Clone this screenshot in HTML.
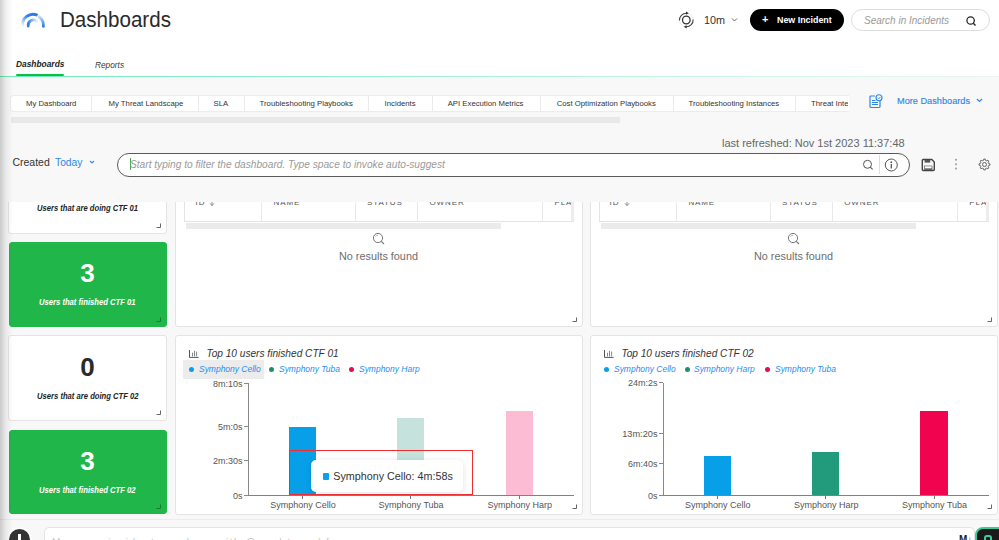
<!DOCTYPE html><html><head><meta charset="utf-8"><style>
html,body{margin:0;padding:0;}
body{width:999px;height:540px;overflow:hidden;position:relative;background:#f8f8f8;font-family:"Liberation Sans",sans-serif;}
.t{position:absolute;white-space:nowrap;}
.r{position:absolute;box-sizing:border-box;}
svg{position:absolute;overflow:visible;}
.i{font-style:italic}
.b{font-weight:bold}
</style></head><body>
<div class="r" style="left:0px;top:0px;width:999px;height:76px;background:#fff"></div>
<div class="r" style="left:0px;top:76px;width:999px;height:1px;background:linear-gradient(to right,#70e9b7 0%,#9ff0d5 40%,#cdf5e6 72%,#eaf8f3 100%)"></div>
<div class="r" style="left:16px;top:74px;width:48px;height:2px;background:#08bf48;border-radius:1px"></div>
<svg style="left:0;top:0" width="60" height="40">
<defs>
<linearGradient id="lg1" x1="0" y1="1" x2="1" y2="0"><stop offset="0" stop-color="#2b7de9" stop-opacity="0"/><stop offset="0.6" stop-color="#2b7de9"/></linearGradient>
<linearGradient id="lg2" x1="0" y1="0" x2="0" y2="1"><stop offset="0" stop-color="#2b7de9" stop-opacity="0.3"/><stop offset="1" stop-color="#2b7de9"/></linearGradient>
<linearGradient id="lg3" x1="0" y1="0" x2="1" y2="0"><stop offset="0" stop-color="#2b7de9"/><stop offset="1" stop-color="#2b7de9" stop-opacity="0.1"/></linearGradient>
</defs>
<path d="M22.6 26.5 A10.6 10.6 0 0 1 37.6 15.3" fill="none" stroke="url(#lg1)" stroke-width="2.9"/>
<path d="M39.3 16.8 A10.6 10.6 0 0 1 43.4 26.3" fill="none" stroke="url(#lg2)" stroke-width="2.8" stroke-linecap="round"/>
<path d="M28.3 26 A5.2 5.2 0 0 1 36.8 21.2" fill="none" stroke="url(#lg3)" stroke-width="2.8" stroke-linecap="round"/>
</svg>
<div class="t " style="left:59.50px;top:8.98px;font-size:22px;line-height:22px;color:#2a2a2a;transform:scaleX(0.935);transform-origin:0 0">Dashboards</div>
<svg style="left:676px;top:10px" width="20" height="20" viewBox="0 0 20 20">
<circle cx="10.3" cy="10" r="3.8" fill="none" stroke="#333" stroke-width="1.3"/>
<circle cx="10.3" cy="10" r="6.8" fill="none" stroke="#ccc" stroke-width="0.7" stroke-dasharray="1.2 1"/>
<path d="M3.5 10.5 A6.8 6.8 0 0 1 10.5 3.2" fill="none" stroke="#444" stroke-width="1.1"/>
<path d="M17.1 9.5 A6.8 6.8 0 0 1 10.1 16.8" fill="none" stroke="#444" stroke-width="1.1"/>
<path d="M10 1.6 L12.8 3.2 L10 4.7 Z" fill="#333"/>
<path d="M10.6 15.3 L7.8 16.8 L10.6 18.4 Z" fill="#333"/>
</svg>
<div class="t " style="left:704.00px;top:14.96px;font-size:10.8px;line-height:10.8px;color:#333;">10m</div>
<svg style="left:731px;top:17px" width="8" height="6"><path d="M1 1.5 L3.5 4 L6 1.5" fill="none" stroke="#666" stroke-width="1"/></svg>
<div class="r" style="left:750px;top:9px;width:94px;height:22px;background:#000;border-radius:11px"></div>
<div class="t " style="left:762.00px;top:14.29px;font-size:11px;line-height:11px;color:#fff;font-weight:bold">+</div>
<div class="t " style="left:777.00px;top:15.87px;font-size:8.9px;line-height:8.9px;color:#fff;font-weight:bold">New Incident</div>
<div class="r" style="left:851px;top:9px;width:139px;height:22px;background:#fff;border:1px solid #dedede;border-radius:11px"></div>
<div class="t " style="left:864.00px;top:15.84px;font-size:10px;line-height:10px;color:#999;font-style:italic">Search in Incidents</div>
<svg style="left:965px;top:15px" width="12" height="12"><circle cx="5.6" cy="5.5" r="3.7" fill="none" stroke="#222" stroke-width="1.25"/><path d="M8.3 8.2 L10.5 10.4" stroke="#222" stroke-width="1.35"/></svg>
<div class="t " style="left:16.00px;top:59.89px;font-size:8.4px;line-height:8.4px;color:#222;font-style:italic;font-weight:bold">Dashboards</div>
<div class="t " style="left:95.00px;top:60.77px;font-size:8.3px;line-height:8.3px;color:#3a3a3a;font-style:italic">Reports</div>
<div class="r" style="left:9.5px;top:95.3px;width:839.5px;height:16.299999999999997px;background:#fff;border:1px solid #ececec;border-right:none;border-radius:4px 0 0 4px"></div>
<div class="r" style="left:91.0px;top:96px;width:1px;height:15px;background:#eaeaea"></div>
<div class="r" style="left:197.7px;top:96px;width:1px;height:15px;background:#eaeaea"></div>
<div class="r" style="left:243.7px;top:96px;width:1px;height:15px;background:#eaeaea"></div>
<div class="r" style="left:368.4px;top:96px;width:1px;height:15px;background:#eaeaea"></div>
<div class="r" style="left:431.5px;top:96px;width:1px;height:15px;background:#eaeaea"></div>
<div class="r" style="left:540.2px;top:96px;width:1px;height:15px;background:#eaeaea"></div>
<div class="r" style="left:673.0px;top:96px;width:1px;height:15px;background:#eaeaea"></div>
<div class="r" style="left:795.4px;top:96px;width:1px;height:15px;background:#eaeaea"></div>
<div style="position:absolute;left:0;top:0;width:848px;height:120px;overflow:hidden">
<div class="t " style="left:26.00px;top:100.04px;font-size:7.75px;line-height:7.75px;color:#333;">My Dashboard</div>
<div class="t " style="left:108.50px;top:100.04px;font-size:7.75px;line-height:7.75px;color:#333;">My Threat Landscape</div>
<div class="t " style="left:213.60px;top:100.04px;font-size:7.75px;line-height:7.75px;color:#333;">SLA</div>
<div class="t " style="left:259.60px;top:100.04px;font-size:7.75px;line-height:7.75px;color:#333;">Troubleshooting Playbooks</div>
<div class="t " style="left:384.60px;top:100.04px;font-size:7.75px;line-height:7.75px;color:#333;">Incidents</div>
<div class="t " style="left:447.70px;top:100.04px;font-size:7.75px;line-height:7.75px;color:#333;">API Execution Metrics</div>
<div class="t " style="left:556.70px;top:100.04px;font-size:7.75px;line-height:7.75px;color:#333;">Cost Optimization Playbooks</div>
<div class="t " style="left:688.60px;top:100.04px;font-size:7.75px;line-height:7.75px;color:#333;">Troubleshooting Instances</div>
<div class="t " style="left:811.00px;top:100.04px;font-size:7.75px;line-height:7.75px;color:#333;">Threat Intelligence</div>
</div>
<div class="r" style="left:11px;top:117px;width:609px;height:6px;background:#e8e8e8"></div>
<svg style="left:868px;top:93px" width="16" height="16" viewBox="0 0 16 16">
<path d="M7 3 H3 Q2 3 2 4 V13.5 Q2 14.5 3 14.5 H11 Q12 14.5 12 13.5 V8" fill="none" stroke="#2f86e8" stroke-width="1.2"/>
<path d="M4 7.5 H7.5 M4 9.5 H10 M4 11.5 H10" stroke="#2f86e8" stroke-width="1"/>
<circle cx="11" cy="4.8" r="3" fill="#f8f8f8" stroke="#2f86e8" stroke-width="1.1"/>
<path d="M9.7 4.9 L10.8 5.8 L12.4 3.9" fill="none" stroke="#2f86e8" stroke-width="0.9"/>
</svg>
<div class="t " style="left:897.00px;top:96.51px;font-size:9.2px;line-height:9.2px;color:#2f86e8;-webkit-text-stroke:0.15px #2f86e8">More Dashboards</div>
<svg style="left:976px;top:98px" width="8" height="6"><path d="M1 1 L3.5 3.5 L6 1" fill="none" stroke="#2f86e8" stroke-width="1.1"/></svg>
<div class="t " style="left:722.00px;top:138.09px;font-size:11px;line-height:11px;color:#666;">last refreshed: Nov 1st 2023 11:37:48</div>
<div class="t " style="left:12.40px;top:157.11px;font-size:10.5px;line-height:10.5px;color:#333;">Created</div>
<div class="t " style="left:55.00px;top:158.28px;font-size:10.3px;line-height:10.3px;color:#2f86e8;">Today</div>
<svg style="left:89px;top:160px" width="7" height="6"><path d="M1 1 L3 3 L5 1" fill="none" stroke="#3d8ce8" stroke-width="1.1"/></svg>
<div class="r" style="left:117px;top:153px;width:793px;height:24px;background:#fff;border:1.2px solid #5a5a5a;border-radius:12px"></div>
<div class="r" style="left:130px;top:158px;width:1px;height:12px;background:#4caf50"></div>
<div class="t " style="left:130.00px;top:159.80px;font-size:10.16px;line-height:10.16px;color:#9a9a9a;font-style:italic">Start typing to filter the dashboard. Type space to invoke auto-suggest</div>
<svg style="left:862px;top:159px" width="12" height="12"><circle cx="5.5" cy="5.3" r="4" fill="none" stroke="#555" stroke-width="1"/><path d="M8.3 8.1 L10.6 10.4" stroke="#555" stroke-width="1.1"/></svg>
<div class="r" style="left:879px;top:155px;width:1px;height:19px;background:#ddd"></div>
<svg style="left:884px;top:158px" width="15" height="15"><circle cx="7.3" cy="7" r="6" fill="none" stroke="#555" stroke-width="1"/><circle cx="7.3" cy="4.2" r="0.9" fill="#555"/><path d="M7.3 6 V10.5" stroke="#555" stroke-width="1.3"/></svg>
<svg style="left:921px;top:157.5px" width="15" height="14" viewBox="0 0 15 14">
<path d="M2.3 1.5 H10.8 L13.3 4 V11.5 Q13.3 12.5 12.3 12.5 H2.3 Q1.3 12.5 1.3 11.5 V2.5 Q1.3 1.5 2.3 1.5 Z" fill="none" stroke="#444" stroke-width="1.4"/>
<rect x="3.6" y="2" width="5.6" height="2.6" fill="#555"/>
<rect x="3.2" y="7.6" width="8.2" height="4.4" fill="#666"/>
<rect x="4" y="8.3" width="6.6" height="2" fill="#fff"/>
</svg>
<svg style="left:953px;top:158px" width="6" height="13"><circle cx="3" cy="1.8" r="1" fill="#999"/><circle cx="3" cy="6.2" r="1" fill="#999"/><circle cx="3" cy="10.6" r="1" fill="#999"/></svg>
<svg style="left:978px;top:158px" width="13" height="13" viewBox="0 0 13 13">
<path fill="none" stroke="#555" stroke-width="0.9" stroke-linejoin="round" d="M5.56 2.30 L5.82 1.04 L7.18 1.04 L7.44 2.30 L8.80 2.87 L9.88 2.16 L10.84 3.12 L10.13 4.20 L10.70 5.56 L11.96 5.82 L11.96 7.18 L10.70 7.44 L10.13 8.80 L10.84 9.88 L9.88 10.84 L8.80 10.13 L7.44 10.70 L7.18 11.96 L5.82 11.96 L5.56 10.70 L4.20 10.13 L3.12 10.84 L2.16 9.88 L2.87 8.80 L2.30 7.44 L1.04 7.18 L1.04 5.82 L2.30 5.56 L2.87 4.20 L2.16 3.12 L3.12 2.16 L4.20 2.87 Z"/>
<circle cx="6.5" cy="6.5" r="2" fill="none" stroke="#555" stroke-width="0.9"/>
</svg>
<div style="position:absolute;left:0;top:201.6px;width:999px;height:317.4px;overflow:hidden">
<div class="r" style="left:8px;top:-51.599999999999994px;width:159px;height:84px;background:#fff;border:1px solid #e4e4e4;border-radius:3px"></div>
<div class="t " style="left:37.00px;top:2.20px;font-size:8.5px;line-height:8.5px;color:#222;font-style:italic;font-weight:bold;transform:scaleX(0.895);transform-origin:0 0">Users that are doing CTF 01</div>
<svg style="left:156px;top:21.400000000000006px" width="6" height="6"><path d="M4.5 0.5 V4.5 H0.5" fill="none" stroke="#666" stroke-width="1"/></svg>
<div class="r" style="left:9px;top:40.400000000000006px;width:158px;height:85px;background:#21b64a;border:1px solid #21b64a;border-radius:3px"></div>
<div class="t " style="left:67.50px;top:58.39px;font-size:26px;line-height:26px;color:#fff;font-weight:bold;width:40px;text-align:center">3</div>
<div class="t " style="left:39.00px;top:96.40px;font-size:8.5px;line-height:8.5px;color:#fff;font-style:italic;font-weight:bold;transform:scaleX(0.9);transform-origin:0 0">Users that finished CTF 01</div>
<svg style="left:156px;top:115.4px" width="6" height="6"><path d="M4.5 0.5 V4.5 H0.5" fill="none" stroke="#1a7a34" stroke-width="1"/></svg>
<div class="r" style="left:175px;top:-51.599999999999994px;width:408px;height:177px;background:#fff;border:1px solid #e4e4e4;border-radius:3px"></div>
<div class="r" style="left:183.5px;top:-51.599999999999994px;width:390.5px;height:71.5px;border:1px solid #e4e4e4;background:#fff"></div>
<div class="r" style="left:571px;top:-51.599999999999994px;width:3px;height:71px;background:#ededed"></div>
<div class="r" style="left:260.8px;top:-51.599999999999994px;width:1px;height:71px;background:#e8e8e8"></div>
<div class="r" style="left:354.5px;top:-51.599999999999994px;width:1px;height:71px;background:#e8e8e8"></div>
<div class="r" style="left:417px;top:-51.599999999999994px;width:1px;height:71px;background:#e8e8e8"></div>
<div class="r" style="left:542px;top:-51.599999999999994px;width:1px;height:71px;background:#e8e8e8"></div>
<div style="position:absolute;left:183.5px;top:0;width:387px;height:30px;overflow:hidden"><div class="t " style="left:12.10px;top:-2.57px;font-size:8px;line-height:8px;color:#555;letter-spacing:0.9px">ID</div>
<div class="t " style="left:90.10px;top:-2.57px;font-size:8px;line-height:8px;color:#555;letter-spacing:0.9px">NAME</div>
<div class="t " style="left:183.50px;top:-2.57px;font-size:8px;line-height:8px;color:#555;letter-spacing:0.9px">STATUS</div>
<div class="t " style="left:246.00px;top:-2.57px;font-size:8px;line-height:8px;color:#555;letter-spacing:0.9px">OWNER</div>
<div class="t " style="left:371.00px;top:-2.57px;font-size:8px;line-height:8px;color:#555;letter-spacing:0.9px">PLAYBOOK</div>
</div>
<svg style="left:208.5px;top:-1.9px" width="7" height="7"><path d="M3 0 V5.5 M1 3.4 L3 5.6 L5 3.4" fill="none" stroke="#888" stroke-width="0.95"/></svg>
<div class="r" style="left:186px;top:21.400000000000006px;width:314.75px;height:6.0px;background:#ebebeb"></div>
<svg style="left:372px;top:30.400000000000006px" width="14" height="14"><circle cx="6" cy="6" r="4.6" fill="none" stroke="#777" stroke-width="1"/><path d="M3.6 4.6 A2.8 2.8 0 0 1 6 3.2" fill="none" stroke="#999" stroke-width="0.8"/><path d="M9.3 9.3 L12 12" stroke="#777" stroke-width="1.1"/></svg>
<div class="t " style="left:339.00px;top:49.22px;font-size:10.85px;line-height:10.85px;color:#6e6e6e;">No results found</div>
<svg style="left:572px;top:115.4px" width="6" height="6"><path d="M4.5 0.5 V4.5 H0.5" fill="none" stroke="#666" stroke-width="1"/></svg>
<div class="r" style="left:590px;top:-51.599999999999994px;width:408px;height:177px;background:#fff;border:1px solid #e4e4e4;border-radius:3px"></div>
<div class="r" style="left:598.5px;top:-51.599999999999994px;width:390.5px;height:71.5px;border:1px solid #e4e4e4;background:#fff"></div>
<div class="r" style="left:986px;top:-51.599999999999994px;width:3px;height:71px;background:#ededed"></div>
<div class="r" style="left:675.8px;top:-51.599999999999994px;width:1px;height:71px;background:#e8e8e8"></div>
<div class="r" style="left:769.5px;top:-51.599999999999994px;width:1px;height:71px;background:#e8e8e8"></div>
<div class="r" style="left:832px;top:-51.599999999999994px;width:1px;height:71px;background:#e8e8e8"></div>
<div class="r" style="left:957px;top:-51.599999999999994px;width:1px;height:71px;background:#e8e8e8"></div>
<div style="position:absolute;left:598.5px;top:0;width:387px;height:30px;overflow:hidden"><div class="t " style="left:11.10px;top:-2.57px;font-size:8px;line-height:8px;color:#555;letter-spacing:0.9px">ID</div>
<div class="t " style="left:89.90px;top:-2.57px;font-size:8px;line-height:8px;color:#555;letter-spacing:0.9px">NAME</div>
<div class="t " style="left:183.50px;top:-2.57px;font-size:8px;line-height:8px;color:#555;letter-spacing:0.9px">STATUS</div>
<div class="t " style="left:245.70px;top:-2.57px;font-size:8px;line-height:8px;color:#555;letter-spacing:0.9px">OWNER</div>
<div class="t " style="left:370.80px;top:-2.57px;font-size:8px;line-height:8px;color:#555;letter-spacing:0.9px">PLAYBOOK</div>
</div>
<svg style="left:623.5px;top:-1.9px" width="7" height="7"><path d="M3 0 V5.5 M1 3.4 L3 5.6 L5 3.4" fill="none" stroke="#888" stroke-width="0.95"/></svg>
<div class="r" style="left:601px;top:21.400000000000006px;width:315px;height:6.0px;background:#ebebeb"></div>
<svg style="left:787px;top:30.400000000000006px" width="14" height="14"><circle cx="6" cy="6" r="4.6" fill="none" stroke="#777" stroke-width="1"/><path d="M3.6 4.6 A2.8 2.8 0 0 1 6 3.2" fill="none" stroke="#999" stroke-width="0.8"/><path d="M9.3 9.3 L12 12" stroke="#777" stroke-width="1.1"/></svg>
<div class="t " style="left:754.00px;top:49.22px;font-size:10.85px;line-height:10.85px;color:#6e6e6e;">No results found</div>
<svg style="left:987px;top:115.4px" width="6" height="6"><path d="M4.5 0.5 V4.5 H0.5" fill="none" stroke="#666" stroke-width="1"/></svg>
<div class="r" style="left:8px;top:133.4px;width:159px;height:86.5px;background:#fff;border:1px solid #e4e4e4;border-radius:3px"></div>
<div class="t " style="left:67.50px;top:151.99px;font-size:26px;line-height:26px;color:#2a2a2a;font-weight:bold;width:40px;text-align:center">0</div>
<div class="t " style="left:36.70px;top:190.20px;font-size:8.5px;line-height:8.5px;color:#222;font-style:italic;font-weight:bold;transform:scaleX(0.9);transform-origin:0 0">Users that are doing CTF 02</div>
<svg style="left:156px;top:208.4px" width="6" height="6"><path d="M4.5 0.5 V4.5 H0.5" fill="none" stroke="#666" stroke-width="1"/></svg>
<div class="r" style="left:9px;top:228.4px;width:158px;height:84.20000000000005px;background:#21b64a;border:1px solid #21b64a;border-radius:3px"></div>
<div class="t " style="left:67.50px;top:245.99px;font-size:26px;line-height:26px;color:#fff;font-weight:bold;width:40px;text-align:center">3</div>
<div class="t " style="left:39.30px;top:284.00px;font-size:8.5px;line-height:8.5px;color:#fff;font-style:italic;font-weight:bold;transform:scaleX(0.9);transform-origin:0 0">Users that finished CTF 02</div>
<svg style="left:156px;top:302.4px" width="6" height="6"><path d="M4.5 0.5 V4.5 H0.5" fill="none" stroke="#1a7a34" stroke-width="1"/></svg>
<div class="r" style="left:175px;top:133.4px;width:408px;height:180px;background:#fff;border:1px solid #e4e4e4;border-radius:3px"></div>
<svg style="left:189px;top:148.4px" width="11" height="9"><path d="M0.5 0 V7.4 H9.6" fill="none" stroke="#555" stroke-width="1"/><path d="M3.5 6 V3.1 M5.5 6 V1.2 M7.6 6 V1.9" stroke="#777" stroke-width="0.9" stroke-linecap="round"/></svg>
<div class="t " style="left:206.40px;top:147.01px;font-size:10.15px;line-height:10.15px;color:#333;font-style:italic">Top 10 users finished CTF 01</div>
<div class="r" style="left:183.3px;top:158.79999999999998px;width:81.0px;height:18.600000000000023px;background:#ececec"></div>
<div class="r" style="left:188.8px;top:165.4px;width:5px;height:5px;border-radius:50%;background:#07a0e8"></div>
<div class="t " style="left:198.50px;top:163.33px;font-size:9.3px;line-height:9.3px;color:#2b8cf2;font-style:italic;transform:scaleX(0.91);transform-origin:0 0">Symphony Cello</div>
<div class="r" style="left:269.3px;top:165.4px;width:5px;height:5px;border-radius:50%;background:#1e8f6e"></div>
<div class="t " style="left:279.00px;top:163.33px;font-size:9.3px;line-height:9.3px;color:#2b8cf2;font-style:italic;transform:scaleX(0.91);transform-origin:0 0">Symphony Tuba</div>
<div class="r" style="left:349.1px;top:165.4px;width:5px;height:5px;border-radius:50%;background:#ea0a52"></div>
<div class="t " style="left:358.80px;top:163.33px;font-size:9.3px;line-height:9.3px;color:#2b8cf2;font-style:italic;transform:scaleX(0.91);transform-origin:0 0">Symphony Harp</div>
<div class="r" style="left:247.8px;top:181.4px;width:1.0px;height:112.99999999999997px;background:#8a8a8a"></div>
<div class="r" style="left:247.8px;top:293.4px;width:326.2px;height:1.0px;background:#808080"></div>
<div class="r" style="left:244.10000000000002px;top:181.50000000000003px;width:3.6999999999999886px;height:1.0px;background:#888"></div>
<div class="t" style="right:756.5px;top:178.43150000000003px;font-size:9px;line-height:9px;color:#555">8m:10s</div>
<div class="r" style="left:244.10000000000002px;top:224.20000000000002px;width:3.6999999999999886px;height:1.0px;background:#888"></div>
<div class="t" style="right:756.5px;top:221.13150000000002px;font-size:9px;line-height:9px;color:#555">5m:0s</div>
<div class="r" style="left:244.10000000000002px;top:258.5px;width:3.6999999999999886px;height:1.0px;background:#888"></div>
<div class="t" style="right:756.5px;top:255.4315px;font-size:9px;line-height:9px;color:#555">2m:30s</div>
<div class="r" style="left:244.10000000000002px;top:293.4px;width:3.6999999999999886px;height:1.0px;background:#888"></div>
<div class="t" style="right:756.5px;top:290.3315px;font-size:9px;line-height:9px;color:#555">0s</div>
<div class="r" style="left:289px;top:225.4px;width:27px;height:67.99999999999997px;background:#07a0e8"></div>
<div class="r" style="left:397px;top:216.20000000000002px;width:27.399999999999977px;height:42.19999999999996px;background:#c5e3dc"></div>
<div class="r" style="left:505.6px;top:209.6px;width:27.5px;height:83.79999999999998px;background:#fbbcd4"></div>
<div class="r" style="left:301.9px;top:293.4px;width:1.0px;height:4.5px;background:#777"></div>
<div class="t" style="left:263px;width:80px;text-align:center;top:299.18149999999997px;font-size:9px;line-height:9px;color:#555">Symphony Cello</div>
<div class="r" style="left:410.0px;top:293.4px;width:1.0px;height:4.5px;background:#777"></div>
<div class="t" style="left:371.1px;width:80px;text-align:center;top:299.18149999999997px;font-size:9px;line-height:9px;color:#555">Symphony Tuba</div>
<div class="r" style="left:518.6px;top:293.4px;width:1.0px;height:4.5px;background:#777"></div>
<div class="t" style="left:479.70000000000005px;width:80px;text-align:center;top:299.18149999999997px;font-size:9px;line-height:9px;color:#555">Symphony Harp</div>
<svg style="left:572px;top:302.4px" width="6" height="6"><path d="M4.5 0.5 V4.5 H0.5" fill="none" stroke="#666" stroke-width="1"/></svg>
<div class="r" style="left:590px;top:133.4px;width:408px;height:180px;background:#fff;border:1px solid #e4e4e4;border-radius:3px"></div>
<svg style="left:604px;top:148.4px" width="11" height="9"><path d="M0.5 0 V7.4 H9.6" fill="none" stroke="#555" stroke-width="1"/><path d="M3.5 6 V3.1 M5.5 6 V1.2 M7.6 6 V1.9" stroke="#777" stroke-width="0.9" stroke-linecap="round"/></svg>
<div class="t " style="left:621.40px;top:147.01px;font-size:10.15px;line-height:10.15px;color:#333;font-style:italic">Top 10 users finished CTF 02</div>
<div class="r" style="left:604.1px;top:165.4px;width:5px;height:5px;border-radius:50%;background:#07a0e8"></div>
<div class="t " style="left:613.80px;top:163.33px;font-size:9.3px;line-height:9.3px;color:#2b8cf2;font-style:italic;transform:scaleX(0.91);transform-origin:0 0">Symphony Cello</div>
<div class="r" style="left:684.5px;top:165.4px;width:5px;height:5px;border-radius:50%;background:#1e8f6e"></div>
<div class="t " style="left:694.20px;top:163.33px;font-size:9.3px;line-height:9.3px;color:#2b8cf2;font-style:italic;transform:scaleX(0.91);transform-origin:0 0">Symphony Harp</div>
<div class="r" style="left:764.9px;top:165.4px;width:5px;height:5px;border-radius:50%;background:#ea0a52"></div>
<div class="t " style="left:774.60px;top:163.33px;font-size:9.3px;line-height:9.3px;color:#2b8cf2;font-style:italic;transform:scaleX(0.91);transform-origin:0 0">Symphony Tuba</div>
<div class="r" style="left:662.8px;top:181.4px;width:1.0px;height:112.99999999999997px;background:#8a8a8a"></div>
<div class="r" style="left:662.8px;top:293.4px;width:326.20000000000005px;height:1.0px;background:#808080"></div>
<div class="r" style="left:659.0999999999999px;top:180.9px;width:3.7000000000000455px;height:1.0px;background:#888"></div>
<div class="t" style="right:341.5px;top:177.8315px;font-size:9px;line-height:9px;color:#555">24m:2s</div>
<div class="r" style="left:659.0999999999999px;top:231.20000000000002px;width:3.7000000000000455px;height:1.0px;background:#888"></div>
<div class="t" style="right:341.5px;top:227.96220000000002px;font-size:9.2px;line-height:9.2px;color:#555">13m:20s</div>
<div class="r" style="left:659.0999999999999px;top:261.79999999999995px;width:3.7000000000000455px;height:1.0px;background:#888"></div>
<div class="t" style="right:341.5px;top:258.7314999999999px;font-size:9px;line-height:9px;color:#555">6m:40s</div>
<div class="r" style="left:659.0999999999999px;top:293.4px;width:3.7000000000000455px;height:1.0px;background:#888"></div>
<div class="t" style="right:341.5px;top:290.3315px;font-size:9px;line-height:9px;color:#555">0s</div>
<div class="r" style="left:704px;top:254.50000000000003px;width:27px;height:38.89999999999995px;background:#07a0e8"></div>
<div class="r" style="left:812.2px;top:250.1px;width:27.0px;height:43.29999999999998px;background:#219b7c"></div>
<div class="r" style="left:920.3px;top:209.4px;width:27.5px;height:83.99999999999997px;background:#f0044f"></div>
<div class="r" style="left:716.6999999999999px;top:293.4px;width:1.0px;height:4.5px;background:#777"></div>
<div class="t" style="left:677.8px;width:80px;text-align:center;top:299.18149999999997px;font-size:9px;line-height:9px;color:#555">Symphony Cello</div>
<div class="r" style="left:825.1999999999999px;top:293.4px;width:1.0px;height:4.5px;background:#777"></div>
<div class="t" style="left:786.3px;width:80px;text-align:center;top:299.18149999999997px;font-size:9px;line-height:9px;color:#555">Symphony Harp</div>
<div class="r" style="left:933.5px;top:293.4px;width:1.0px;height:4.5px;background:#777"></div>
<div class="t" style="left:894.6px;width:80px;text-align:center;top:299.18149999999997px;font-size:9px;line-height:9px;color:#555">Symphony Tuba</div>
<svg style="left:987px;top:302.4px" width="6" height="6"><path d="M4.5 0.5 V4.5 H0.5" fill="none" stroke="#666" stroke-width="1"/></svg>
<div class="r" style="left:310.7px;top:258.4px;width:152.6px;height:32.2px;background:#fff;border-radius:5px;box-shadow:0 1px 6px rgba(0,0,0,0.12)"></div>
<div class="r" style="left:322.7px;top:271.70000000000005px;width:6.800000000000011px;height:6.699999999999932px;background:#0aa0ea;border-radius:1px"></div>
<div class="t " style="left:333.30px;top:269.50px;font-size:10.75px;line-height:10.75px;color:#333;">Symphony Cello: 4m:58s</div>
<div class="r" style="left:288.6px;top:248.4px;width:184.79999999999995px;height:44.99999999999997px;border:1.8px solid #ee2e2e"></div>
</div>
<div class="r" style="left:0px;top:519px;width:999px;height:21px;background:#f8f8f8;border-top:1px solid #ececec"></div>
<div class="r" style="left:43.6px;top:527.3px;width:931.9px;height:32.700000000000045px;background:#fff;border:1px solid #e4e4e4;border-radius:5px"></div>
<div style="position:absolute;left:44px;top:528px;width:304px;height:12px;overflow:hidden"><div class="t " style="left:8.00px;top:9.54px;font-size:10px;line-height:10px;color:#c4c4c4;letter-spacing:1.6px">Message incident members with @ and type / for commands</div>
</div><div class="r" style="left:9px;top:529.4px;width:21px;height:21px;border-radius:50%;background:#333;box-shadow:0 0 0 1.5px #fff"></div>
<div class="r" style="left:18px;top:534.2px;width:2.6999999999999993px;height:10.799999999999955px;background:#fff"></div>
<div class="t " style="left:959.00px;top:535.34px;font-size:10px;line-height:10px;color:#222;font-weight:bold">M↓</div>
<div class="r" style="left:974.8px;top:527.3px;width:35.200000000000045px;height:32.700000000000045px;background:#1a1a1a;border:2px solid #3cc99b;border-radius:8px"></div>
<div class="r" style="left:984px;top:535px;width:8px;height:10px;border:2.4px solid #3fcf9e;border-radius:3px"></div>
<div class="r" style="left:0;top:0;width:13px;height:540px;background:linear-gradient(to right,rgba(0,0,0,0.19),rgba(0,0,0,0.06) 45%,rgba(0,0,0,0))"></div>
</body></html>
